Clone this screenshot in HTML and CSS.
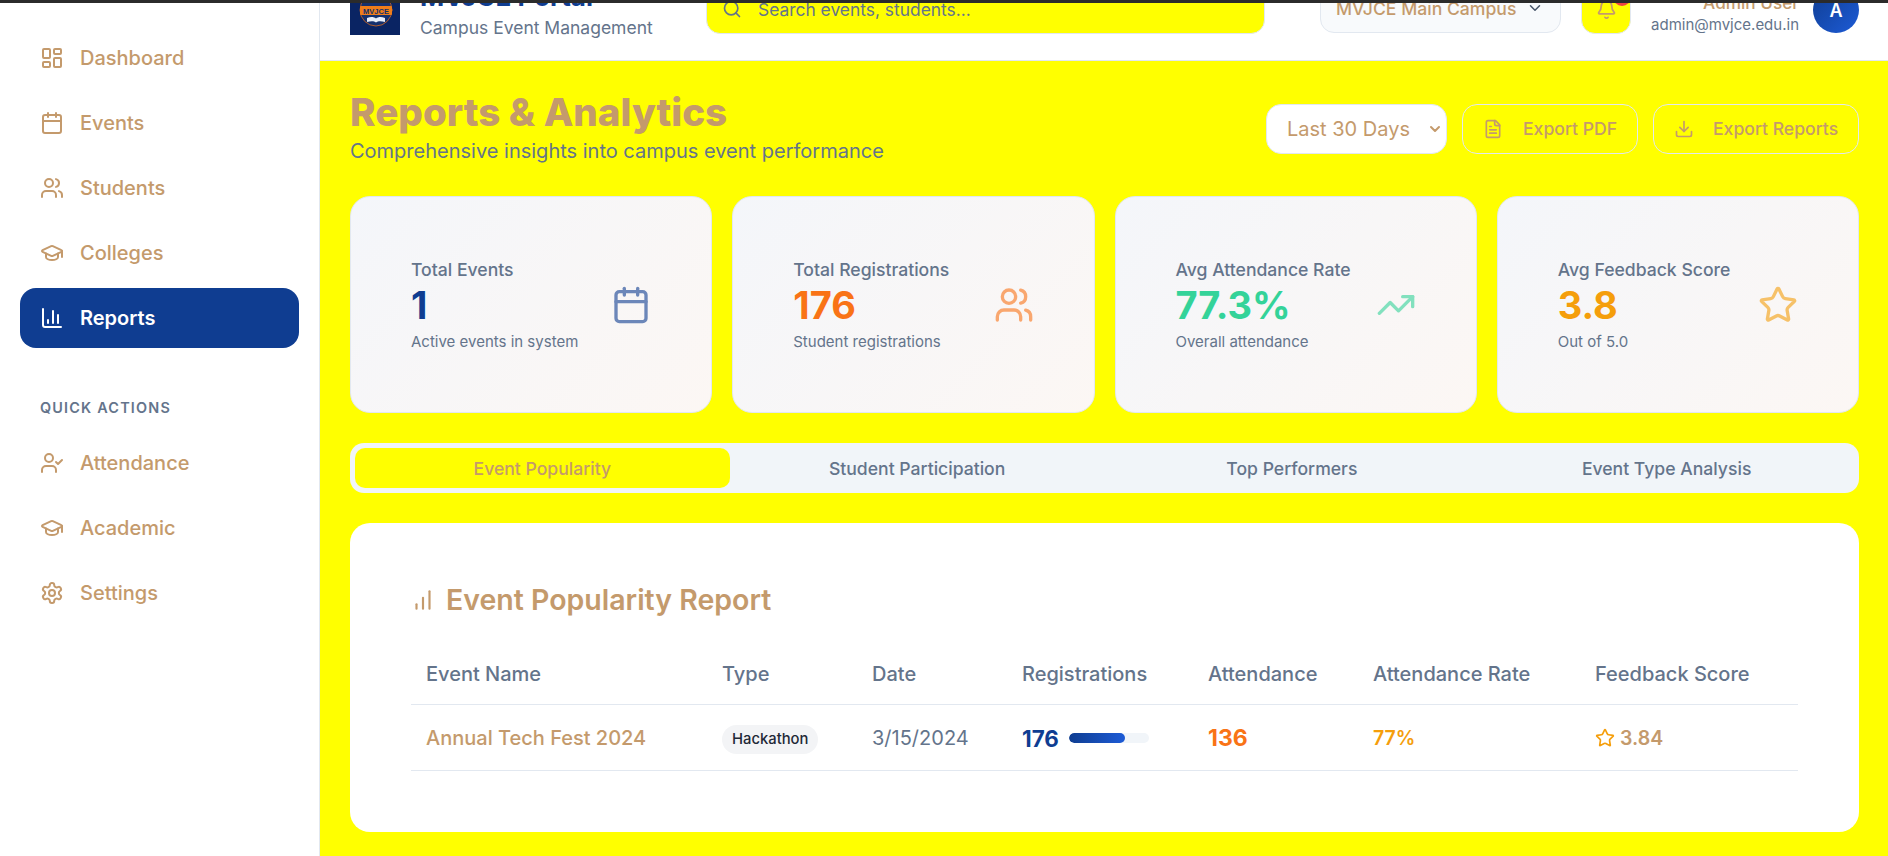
FILE: index.html
```html
<!DOCTYPE html>
<html>
<head>
    <title>Reports &amp; Analytics - MVJCE Portal</title>
    <link rel="stylesheet" href="styles.css">
</head>
<body>
    <svg class="icon-defs" width="0" height="0">
        <defs>
            <symbol id="i-dashboard" viewBox="0 0 24 24"><rect x="3" y="3" width="7" height="9" rx="1"/><rect x="14" y="3" width="7" height="5" rx="1"/><rect x="14" y="12" width="7" height="9" rx="1"/><rect x="3" y="16" width="7" height="5" rx="1"/></symbol>
            <symbol id="i-calendar" viewBox="0 0 24 24"><path d="M8 2v4"/><path d="M16 2v4"/><rect x="3" y="4" width="18" height="18" rx="2"/><path d="M3 10h18"/></symbol>
            <symbol id="i-users" viewBox="0 0 24 24"><path d="M16 21v-2a4 4 0 0 0-4-4H6a4 4 0 0 0-4 4v2"/><circle cx="9" cy="7" r="4"/><path d="M22 21v-2a4 4 0 0 0-3-3.87"/><path d="M16 3.13a4 4 0 0 1 0 7.75"/></symbol>
            <symbol id="i-cap" viewBox="0 0 24 24"><path d="M21.42 10.92a1 1 0 0 0-.02-1.84L12.83 5.18a2 2 0 0 0-1.66 0L2.6 9.08a1 1 0 0 0 0 1.83l8.57 3.91a2 2 0 0 0 1.66 0z"/><path d="M22 10v6"/><path d="M6 12.5V16a6 3 0 0 0 12 0v-3.5"/></symbol>
            <symbol id="i-chart" viewBox="0 0 24 24"><path d="M3 3v16a2 2 0 0 0 2 2h16"/><path d="M18 17V9"/><path d="M13 17V5"/><path d="M8 17v-3"/></symbol>
            <symbol id="i-usercheck" viewBox="0 0 24 24"><path d="M16 21v-2a4 4 0 0 0-4-4H6a4 4 0 0 0-4 4v2"/><circle cx="9" cy="7" r="4"/><path d="m16 11 2 2 4-4"/></symbol>
            <symbol id="i-settings" viewBox="0 0 24 24"><path d="M12.22 2h-.44a2 2 0 0 0-2 2v.18a2 2 0 0 1-1 1.73l-.43.25a2 2 0 0 1-2 0l-.15-.08a2 2 0 0 0-2.73.73l-.22.38a2 2 0 0 0 .73 2.73l.15.1a2 2 0 0 1 1 1.72v.51a2 2 0 0 1-1 1.74l-.15.09a2 2 0 0 0-.73 2.73l.22.38a2 2 0 0 0 2.73.73l.15-.08a2 2 0 0 1 2 0l.43.25a2 2 0 0 1 1 1.73V20a2 2 0 0 0 2 2h.44a2 2 0 0 0 2-2v-.18a2 2 0 0 1 1-1.73l.43-.25a2 2 0 0 1 2 0l.15.08a2 2 0 0 0 2.73-.73l.22-.39a2 2 0 0 0-.73-2.73l-.15-.08a2 2 0 0 1-1-1.74v-.5a2 2 0 0 1 1-1.74l.15-.09a2 2 0 0 0 .73-2.73l-.22-.38a2 2 0 0 0-2.73-.73l-.15.08a2 2 0 0 1-2 0l-.43-.25a2 2 0 0 1-1-1.73V4a2 2 0 0 0-2-2z"/><circle cx="12" cy="12" r="3"/></symbol>
            <symbol id="i-star" viewBox="0 0 24 24"><path d="M11.525 2.295a.53.53 0 0 1 .95 0l2.31 4.679a2.123 2.123 0 0 0 1.595 1.16l5.166.756a.53.53 0 0 1 .294.904l-3.736 3.638a2.123 2.123 0 0 0-.611 1.878l.882 5.14a.53.53 0 0 1-.771.56l-4.618-2.428a2.122 2.122 0 0 0-1.973 0L6.396 21.01a.53.53 0 0 1-.77-.56l.881-5.139a2.122 2.122 0 0 0-.611-1.879L2.16 9.795a.53.53 0 0 1 .294-.906l5.165-.755a2.122 2.122 0 0 0 1.597-1.16z"/></symbol>
            <symbol id="i-trend" viewBox="0 0 24 24"><path d="M16 7h6v6"/><path d="m22 7-8.5 8.5-5-5L2 17"/></symbol>
            <symbol id="i-file" viewBox="0 0 24 24"><path d="M15 2H6a2 2 0 0 0-2 2v16a2 2 0 0 0 2 2h12a2 2 0 0 0 2-2V7z"/><path d="M14 2v4a2 2 0 0 0 2 2h4"/><path d="M10 9H8"/><path d="M16 13H8"/><path d="M16 17H8"/></symbol>
            <symbol id="i-download" viewBox="0 0 24 24"><path d="M12 15V3"/><path d="M21 15v4a2 2 0 0 1-2 2H5a2 2 0 0 1-2-2v-4"/><path d="m7 10 5 5 5-5"/></symbol>
            <symbol id="i-bars" viewBox="0 0 24 24"><path d="M18 20V4"/><path d="M12 20V10"/><path d="M6 20v-4"/></symbol>
            <symbol id="i-search" viewBox="0 0 24 24"><path d="m21 21-4.34-4.34"/><circle cx="11" cy="11" r="8"/></symbol>
            <symbol id="i-bell" viewBox="0 0 24 24"><path d="M10.268 21a2 2 0 0 0 3.464 0"/><path d="M3.262 15.326A1 1 0 0 0 4 17h16a1 1 0 0 0 .74-1.673C19.41 13.956 18 12.499 18 8A6 6 0 0 0 6 8c0 4.499-1.411 5.956-2.738 7.326"/></symbol>
            <symbol id="i-chevron" viewBox="0 0 24 24"><path d="m6 9 6 6 6-6"/></symbol>
        </defs>
    </svg>

    <div class="window-edge"></div>

    <div class="app">
        <aside class="sidebar">
            <nav class="nav-group">
                <a class="nav-item"><svg class="nav-icon"><use href="#i-dashboard"/></svg>Dashboard</a>
                <a class="nav-item"><svg class="nav-icon"><use href="#i-calendar"/></svg>Events</a>
                <a class="nav-item"><svg class="nav-icon"><use href="#i-users"/></svg>Students</a>
                <a class="nav-item"><svg class="nav-icon"><use href="#i-cap"/></svg>Colleges</a>
                <a class="nav-item active"><svg class="nav-icon"><use href="#i-chart"/></svg>Reports</a>
            </nav>
            <div class="nav-heading">QUICK ACTIONS</div>
            <nav class="nav-group">
                <a class="nav-item"><svg class="nav-icon"><use href="#i-usercheck"/></svg>Attendance</a>
                <a class="nav-item"><svg class="nav-icon"><use href="#i-cap"/></svg>Academic</a>
                <a class="nav-item"><svg class="nav-icon"><use href="#i-settings"/></svg>Settings</a>
            </nav>
        </aside>

        <div class="main">
            <header class="topbar">
                <div class="brand">
                    <div class="logo">
                        <svg viewBox="0 0 50 50" width="50" height="50">
                            <rect width="50" height="50" fill="#0a2463"/>
                            <circle cx="26" cy="25" r="16" fill="#14306e" stroke="#d9691c" stroke-width="0.8"/>
                            <rect x="10" y="21" width="32" height="9" rx="1" fill="#ef7d1a"/>
                            <text class="logo-text" x="26" y="28.5" text-anchor="middle">MVJCE</text>
                            <path d="M17 33c4-1.500 7-1 9 .5 2-1.500 5-2 9-.5v4c-4-1-7-1-9 .5-2-1.500-5-1.500-9-.5z" class="logo-book"/>
                        </svg>
                    </div>
                    <div class="brand-text">
                        <div class="brand-title">MVJCE Portal</div>
                        <div class="brand-sub">Campus Event Management</div>
                    </div>
                </div>
                <div class="search">
                    <svg class="search-icon"><use href="#i-search"/></svg>
                    <span>Search events, students...</span>
                </div>
                <div class="campus">
                    <span>MVJCE Main Campus</span>
                    <svg class="campus-chevron"><use href="#i-chevron"/></svg>
                </div>
                <div class="bell">
                    <svg class="bell-icon"><use href="#i-bell"/></svg>
                    <span class="bell-dot"></span>
                </div>
                <div class="user">
                    <div class="user-name">Admin User</div>
                    <div class="user-mail">admin@mvjce.edu.in</div>
                </div>
                <div class="avatar">A</div>
            </header>

            <main class="content">
                <div class="page-head">
                    <div class="page-heading">
                        <h1 class="page-title">Reports &amp; Analytics</h1>
                        <p class="page-sub">Comprehensive insights into campus event performance</p>
                    </div>
                    <div class="page-actions">
                        <div class="range">Last 30 Days<svg class="range-chevron"><use href="#i-chevron"/></svg></div>
                        <button class="btn btn-pdf"><svg class="btn-icon"><use href="#i-file"/></svg>Export PDF</button>
                        <button class="btn btn-reports"><svg class="btn-icon"><use href="#i-download"/></svg>Export Reports</button>
                    </div>
                </div>

                <section class="stats">
                    <div class="stat">
                        <div>
                            <div class="stat-label">Total Events</div>
                            <div class="stat-value c-blue">1</div>
                            <div class="stat-note">Active events in system</div>
                        </div>
                        <svg class="stat-icon c-blue"><use href="#i-calendar"/></svg>
                    </div>
                    <div class="stat">
                        <div>
                            <div class="stat-label">Total Registrations</div>
                            <div class="stat-value c-orange">176</div>
                            <div class="stat-note">Student registrations</div>
                        </div>
                        <svg class="stat-icon c-orange"><use href="#i-users"/></svg>
                    </div>
                    <div class="stat">
                        <div>
                            <div class="stat-label">Avg Attendance Rate</div>
                            <div class="stat-value c-green">77.3%</div>
                            <div class="stat-note">Overall attendance</div>
                        </div>
                        <svg class="stat-icon c-green"><use href="#i-trend"/></svg>
                    </div>
                    <div class="stat">
                        <div>
                            <div class="stat-label">Avg Feedback Score</div>
                            <div class="stat-value c-amber">3.8</div>
                            <div class="stat-note">Out of 5.0</div>
                        </div>
                        <svg class="stat-icon c-amber"><use href="#i-star"/></svg>
                    </div>
                </section>

                <div class="tabs">
                    <div class="tab active">Event Popularity</div>
                    <div class="tab">Student Participation</div>
                    <div class="tab">Top Performers</div>
                    <div class="tab">Event Type Analysis</div>
                </div>

                <section class="report">
                    <h2 class="report-title"><svg class="report-icon"><use href="#i-bars"/></svg>Event Popularity Report</h2>
                    <table class="report-table">
                        <thead>
                            <tr>
                                <th class="col-name">Event Name</th>
                                <th class="col-type">Type</th>
                                <th class="col-date">Date</th>
                                <th class="col-reg">Registrations</th>
                                <th class="col-att">Attendance</th>
                                <th class="col-rate">Attendance Rate</th>
                                <th>Feedback Score</th>
                            </tr>
                        </thead>
                        <tbody>
                            <tr>
                                <td class="cell-name">Annual Tech Fest 2024</td>
                                <td><span class="badge">Hackathon</span></td>
                                <td class="cell-date">3/15/2024</td>
                                <td>
                                    <div class="reg">
                                        <span class="reg-num">176</span>
                                        <div class="bar"><div class="bar-fill" style="width: 70%"></div></div>
                                    </div>
                                </td>
                                <td class="cell-att">136</td>
                                <td class="cell-rate">77%</td>
                                <td><div class="score"><svg class="score-star"><use href="#i-star"/></svg>3.84</div></td>
                            </tr>
                        </tbody>
                    </table>
                </section>
            </main>
        </div>
    </div>
</body>
</html>
```

FILE: styles.css
```css
* {
    box-sizing: border-box;
}
html, body {
    margin: 0;
    height: 100%;
    overflow: hidden;
}
body {
    font-family: Inter, "Liberation Sans", sans-serif;
    color: #c49a6c;
    background: #ffff00;
}
svg {
    fill: none;
    stroke: currentColor;
    stroke-width: 2;
    stroke-linecap: round;
    stroke-linejoin: round;
    flex-shrink: 0;
}
.icon-defs {
    position: absolute;
}
.window-edge {
    height: 3px;
    background: #2b2b2b;
}
.app {
    display: flex;
    height: 853px;
}

/* sidebar */
.sidebar {
    width: 320px;
    background: white;
    border-right: 1px solid #e2e8f0;
    padding: 25px 20px 0;
    flex-shrink: 0;
}
.nav-group {
    display: flex;
    flex-direction: column;
    gap: 5px;
}
.nav-item {
    display: flex;
    align-items: center;
    gap: 16px;
    height: 60px;
    padding: 0 20px;
    border-radius: 16px;
    font-size: 20px;
    font-weight: 500;
    color: #c49a6c;
}
.nav-item.active {
    background: #0f3d91;
    color: white;
    font-weight: 600;
}
.nav-icon {
    width: 24px;
    height: 24px;
}
.nav-heading {
    margin: 51px 0 16px;
    padding-left: 20px;
    font-size: 14.4px;
    line-height: 18px;
    font-weight: 600;
    letter-spacing: 1.2px;
    color: #64748b;
}

/* top bar */
.main {
    flex: 1;
    min-width: 0;
    display: flex;
    flex-direction: column;
}
.topbar {
    height: 58px;
    flex-shrink: 0;
    display: flex;
    align-items: flex-end;
    background: white;
    border-bottom: 1px solid #e2e8f0;
    padding: 0 29px 26px 30px;
    overflow: hidden;
}
.brand {
    display: flex;
    align-items: flex-end;
    gap: 20px;
    width: 356px;
    flex-shrink: 0;
}
.logo {
    width: 50px;
    height: 50px;
    flex-shrink: 0;
    margin-bottom: -1px;
}
.logo svg {
    display: block;
    stroke: none;
}
.logo-text {
    font-family: "Liberation Sans", sans-serif;
    font-size: 7.5px;
    font-weight: 700;
    fill: #12306a;
}
.logo-book {
    fill: #e8eef8;
}
.brand-text {
    margin-bottom: -6px;
}
.brand-title {
    font-size: 26px;
    font-weight: 700;
    line-height: 30px;
    margin-bottom: 4px;
    color: #0f3d91;
}
.brand-sub {
    font-size: 17.5px;
    line-height: 24px;
    white-space: nowrap;
    color: #64748b;
}
.search {
    width: 559px;
    height: 50px;
    flex-shrink: 0;
    display: flex;
    align-items: center;
    gap: 16px;
    padding: 0 15px;
    background: #ffff00;
    border: 1px solid #e2e8f0;
    border-radius: 14px;
    font-size: 17.4px;
    color: #64748b;
}
.search-icon {
    width: 20px;
    height: 20px;
}
.campus {
    margin-left: 55px;
    margin-bottom: 1px;
    width: 241px;
    height: 50px;
    flex-shrink: 0;
    display: flex;
    align-items: center;
    justify-content: space-between;
    padding: 0 16px 0 15px;
    background: #f8fafc;
    border: 1px solid #e2e8f0;
    border-radius: 14px;
    font-size: 17.6px;
    font-weight: 500;
    white-space: nowrap;
}
.campus-chevron {
    width: 18px;
    height: 18px;
    color: #475569;
}
.bell {
    position: relative;
    margin-left: 20px;
    width: 50px;
    height: 50px;
    flex-shrink: 0;
    display: flex;
    align-items: center;
    justify-content: center;
    background: #ffff00;
    border: 1px solid #e2e8f0;
    border-radius: 14px;
}
.bell-icon {
    width: 21px;
    height: 21px;
}
.bell-dot {
    position: absolute;
    top: 3px;
    right: -1px;
    width: 18px;
    height: 18px;
    border-radius: 50%;
    background: #ef4444;
}
.user {
    margin-left: auto;
    margin-bottom: -1px;
    text-align: right;
    flex-shrink: 0;
}
.user-name {
    font-size: 17.2px;
    font-weight: 500;
    line-height: 22px;
}
.user-mail {
    margin-top: 1px;
    font-size: 15px;
    line-height: 20px;
    color: #64748b;
}
.avatar {
    margin-left: 14px;
    margin-bottom: 1px;
    width: 46px;
    height: 46px;
    flex-shrink: 0;
    display: flex;
    align-items: center;
    justify-content: center;
    padding-top: 1px;
    border-radius: 50%;
    background: linear-gradient(135deg, #0f3d91, #1d5bd6);
    color: white;
    font-size: 18px;
    font-weight: 600;
}

/* page */
.content {
    flex: 1;
    padding: 30px 29px 30px 30px;
    background: #ffff00;
}
.page-head {
    display: flex;
    justify-content: space-between;
    align-items: center;
    height: 75px;
    margin-bottom: 30px;
}
.page-heading {
    align-self: flex-start;
}
.page-title {
    margin: 0 0 5px;
    font-size: 38.6px;
    line-height: 42px;
    font-weight: 800;
    color: #c49a6c;
}
.page-sub {
    margin: 0;
    font-size: 20px;
    line-height: 26px;
    color: #64748b;
}
.page-actions {
    display: flex;
    gap: 15px;
}
.range {
    width: 181px;
    height: 50px;
    display: flex;
    align-items: center;
    justify-content: space-between;
    padding: 0 3px 0 20px;
    background: white;
    border: 1px solid #e2e8f0;
    border-radius: 15px;
    font-size: 20px;
}
.range-chevron {
    width: 16px;
    height: 16px;
    stroke-width: 3;
}
.btn {
    height: 50px;
    display: flex;
    align-items: center;
    gap: 20px;
    padding: 0 20px;
    background: #ffff00;
    border: 1px solid #e2e8f0;
    border-radius: 15px;
    font-family: inherit;
    font-size: 17.6px;
    font-weight: 500;
    white-space: nowrap;
    color: #c49a6c;
}
.btn-pdf {
    width: 176px;
}
.btn-reports {
    width: 206px;
    gap: 19px;
}
.btn-icon {
    width: 20px;
    height: 20px;
}

/* stat cards */
.stats {
    display: grid;
    grid-template-columns: repeat(4, 1fr);
    gap: 20px;
}
.stat {
    height: 217px;
    display: flex;
    align-items: center;
    justify-content: space-between;
    padding: 0 60px;
    background: linear-gradient(135deg, #f4f6fa, #fcf7f4);
    border: 1px solid #e2e8f0;
    border-radius: 20px;
}
.stat-label {
    padding-top: 3px;
    font-size: 17.6px;
    line-height: 24px;
    font-weight: 500;
    color: #64748b;
}
.stat-value {
    font-size: 38px;
    line-height: 46px;
    font-weight: 700;
}
.stat-note {
    margin: 3px 0 2px;
    font-size: 15px;
    line-height: 22px;
    color: #64748b;
}
.stat-icon {
    width: 40px;
    height: 40px;
    opacity: 0.6;
}
.c-blue { color: #0f3d91; }
.c-orange { color: #f97316; }
.c-green { color: #34d399; }
.c-amber { color: #f59e0b; }

/* tabs */
.tabs {
    display: grid;
    grid-template-columns: repeat(4, 1fr);
    height: 50px;
    margin-top: 30px;
    padding: 5px;
    background: #f1f5f9;
    border-radius: 14px;
}
.tab {
    display: flex;
    align-items: center;
    justify-content: center;
    border-radius: 10px;
    font-size: 17.6px;
    font-weight: 500;
    color: #64748b;
}
.tab.active {
    background: #ffff00;
    color: #c49a6c;
}

/* report */
.report {
    height: 309px;
    margin-top: 30px;
    padding: 59px 61px 0 60px;
    background: white;
    border-radius: 20px;
}
.report-title {
    display: flex;
    align-items: center;
    gap: 10px;
    margin: 0 0 26px;
    font-size: 28.5px;
    line-height: 36px;
    font-weight: 600;
    color: #c49a6c;
}
.report-icon {
    width: 26px;
    height: 26px;
}
.report-table {
    width: calc(100% - 1px);
    margin-left: 1px;
    border-collapse: collapse;
}
.report-table th {
    text-align: left;
    height: 60px;
    padding: 0 16px;
    border-bottom: 1px solid #e2e8f0;
    font-size: 20px;
    font-weight: 500;
    color: #64748b;
}
.report-table td {
    height: 66px;
    padding: 2px 16px 0;
    border-bottom: 1px solid #e2e8f0;
    font-size: 20px;
}
.report-table th:first-child,
.report-table td:first-child {
    padding-left: 15px;
}
.col-name { width: 295px; }
.col-type { width: 150px; }
.col-date { width: 150px; }
.col-reg { width: 186px; }
.col-att { width: 165px; }
.col-rate { width: 222px; }
.cell-name { font-weight: 500; }
.cell-date { color: #64748b; }
.badge {
    display: inline-block;
    margin-top: 2px;
    padding: 5px 10px;
    border-radius: 15px;
    background: #f3f4f6;
    color: #1f2937;
    font-size: 14.8px;
    line-height: 19px;
    font-weight: 500;
}
.reg {
    display: flex;
    align-items: center;
    gap: 10px;
}
.reg-num {
    font-size: 22.4px;
    font-weight: 700;
    color: #0f3d91;
}
.bar {
    width: 80px;
    height: 10px;
    border-radius: 5px;
    background: #f1f5f9;
    overflow: hidden;
}
.bar-fill {
    height: 100%;
    border-radius: 5px;
    background: linear-gradient(90deg, #0f3d91, #1d5bd6);
}
.report-table .cell-att {
    font-size: 23px;
    font-weight: 700;
    color: #f97316;
}
.report-table .cell-rate {
    font-size: 19.5px;
    font-weight: 600;
    color: #f59e0b;
}
.score {
    display: flex;
    align-items: center;
    gap: 5px;
    font-size: 19.5px;
    font-weight: 600;
}
.score-star {
    width: 20px;
    height: 20px;
    color: #f59e0b;
}
```
